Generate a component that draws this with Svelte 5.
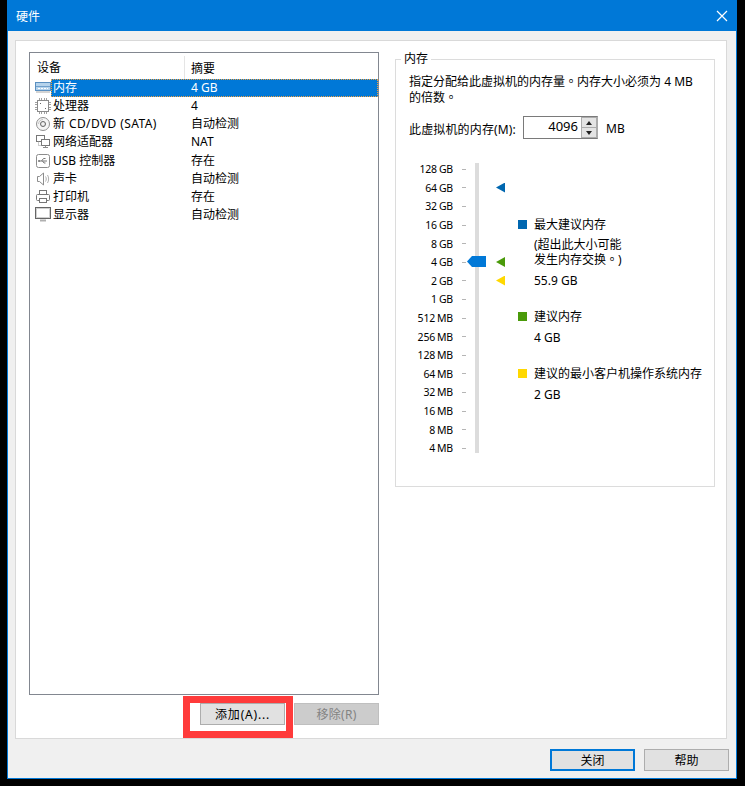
<script>
	const devices = [
		{ name: '内存', summary: '4 GB', icon: 'memory', selected: true },
		{ name: '处理器', summary: '4', icon: 'cpu' },
		{ name: '新 CD/DVD (SATA)', summary: '自动检测', icon: 'cd', wide: true },
		{ name: '网络适配器', summary: 'NAT', icon: 'net' },
		{ name: 'USB 控制器', summary: '存在', icon: 'usb' },
		{ name: '声卡', summary: '自动检测', icon: 'sound' },
		{ name: '打印机', summary: '存在', icon: 'printer' },
		{ name: '显示器', summary: '自动检测', icon: 'display' }
	];

	const scale = [
		{ label: '128 GB' },
		{ label: '64 GB', marker: 'blue' },
		{ label: '32 GB' },
		{ label: '16 GB' },
		{ label: '8 GB' },
		{ label: '4 GB', marker: 'green', thumb: true },
		{ label: '2 GB', marker: 'yellow' },
		{ label: '1 GB' },
		{ label: '512 MB' },
		{ label: '256 MB' },
		{ label: '128 MB' },
		{ label: '64 MB' },
		{ label: '32 MB' },
		{ label: '16 MB' },
		{ label: '8 MB' },
		{ label: '4 MB' }
	];
</script>

<div class="window">
	<header class="titlebar">
		<span>硬件</span>
		<svg class="close-x" width="12" height="12" viewBox="0 0 12 12">
			<path d="M1 1l10 10M11 1L1 11" stroke="#fff" stroke-width="1.2" fill="none" />
		</svg>
	</header>

	<main class="panel">
		<section class="left">
			<div class="listbox">
				<div class="list-head">
					<div class="col-device">设备</div>
					<div class="col-summary">摘要</div>
				</div>
				{#each devices as d}
					<div class="row">
						<svg class="icon" width="16" height="16" viewBox="0 0 16 16" fill="none">
							{#if d.icon === 'memory'}
								<rect x="0.5" y="2.5" width="15" height="8" fill="#b5d3ec" stroke="#5a8fc0" />
								<path d="M1 6.500h14" stroke="#6f9fcb" />
								<path d="M3 8.500h2M6 8.500h2M9 8.500h2M12 8.500h1" stroke="#fff" />
								<path d="M1 12h14" stroke="#a8a8a8" />
							{:else if d.icon === 'cpu'}
								<rect x="2.500" y="2.500" width="11" height="11" fill="#fff" stroke="#8a8a8a" />
								<path d="M4.500 0v2M6.500 0v2M9.500 0v2M11.500 0v2M4.500 14v2M6.500 14v2M9.500 14v2M11.500 14v2M0 4.500h2M0 6.500h2M0 9.500h2M0 11.500h2M14 4.500h2M14 6.500h2M14 9.500h2M14 11.500h2" stroke="#a0a0a0" />
								<path d="M5 5h1v1H5zM10 10h1v1h-1z" fill="#666" />
							{:else if d.icon === 'cd'}
								<circle cx="8" cy="8" r="6.500" fill="#f5f5f5" stroke="#909090" />
								<path d="M3.500 8a4.500 4.500 0 0 1 4.500-4.500" stroke="#c4c4c4" />
								<circle cx="8" cy="8" r="2.500" fill="#e8e8e8" stroke="#666" />
								<circle cx="8" cy="8" r="0.800" fill="#fff" />
							{:else if d.icon === 'net'}
								<rect x="1.500" y="1.500" width="8" height="6" fill="#fff" stroke="#777" />
								<rect x="6.500" y="5.500" width="8" height="6" fill="#fff" stroke="#777" />
								<path d="M10.500 11.500v2M8 13.500h5" stroke="#8a8a8a" />
								<path d="M3.500 7.500v4h3" stroke="#999" stroke-dasharray="1 1" />
							{:else if d.icon === 'usb'}
								<rect x="1.500" y="1.500" width="13" height="13" rx="2" fill="#fff" stroke="#8c8c8c" />
								<path d="M4 8h8M6.500 8l2-2.500h2M7.500 8l1.500 2h1.500" stroke="#777" />
								<circle cx="4" cy="8" r="1" fill="#777" />
							{:else if d.icon === 'sound'}
								<path d="M2.500 5.500h2l4-3.500v12l-4-3.500h-2z" fill="#fff" stroke="#8c8c8c" />
								<path d="M10.500 5.500c1 1.500 1 3.500 0 5M12.500 4c1.500 2.500 1.500 5.500 0 8" stroke="#b0b0b0" />
							{:else if d.icon === 'printer'}
								<rect x="4.500" y="1.500" width="7" height="4" fill="#fff" stroke="#777" />
								<rect x="1.500" y="5.500" width="13" height="6" rx="1" fill="#fff" stroke="#777" />
								<rect x="4.500" y="9.500" width="7" height="4" fill="#fff" stroke="#777" />
							{:else}
								<rect x="0.500" y="0.500" width="15" height="11" fill="#fff" stroke="#666" />
								<rect x="1.500" y="1.500" width="13" height="9" stroke="#d0d0d0" />
								<path d="M5 13.500h6" stroke="#b0b0b0" stroke-width="2" />
							{/if}
						</svg>
						<div class="cell" class:selected={d.selected}>
							<span class="name" class:wide={d.wide}>{d.name}</span>
							<span class="summary">{d.summary}</span>
						</div>
					</div>
				{/each}
			</div>
			<div class="list-actions">
				<button class="btn add">添加(A)...</button>
				<button class="btn disabled">移除(R)</button>
				<div class="annotation"></div>
			</div>
		</section>

		<fieldset class="group">
			<legend>内存</legend>
			<p class="desc">指定分配给此虚拟机的内存量<span class="tc">。</span>内存大小必须为 4 MB<br />的倍数<span class="tc">。</span></p>
			<div class="amount">
				<span class="amount-label">此虚拟机的内存(M):</span>
				<div class="spin">
					<div class="spin-value">4096</div>
					<div class="spin-btns">
						<div class="spin-btn"><i class="up"></i></div>
						<div class="spin-btn"><i class="down"></i></div>
					</div>
				</div>
				<span class="unit">MB</span>
			</div>

			<div class="slider-area">
				<div class="scale">
					{#each scale as s}
						<div class="scale-row">
							<span class="scale-label">{s.label}</span>
							<span class="tick"></span>
							{#if s.thumb}<span class="thumb"></span>{/if}
							{#if s.marker}<span class="marker {s.marker}"></span>{/if}
						</div>
					{/each}
				</div>

				<div class="legend-col">
					<div class="legend-title first"><span class="sq blue"></span>最大建议内存</div>
					<div class="note">(超出此大小可能<br />发生内存交换<span class="tc">。</span>)</div>
					<div class="value v1">55.9 GB</div>
					<div class="legend-title second"><span class="sq green"></span>建议内存</div>
					<div class="value v2">4 GB</div>
					<div class="legend-title third"><span class="sq yellow"></span>建议的最小客户机操作系统内存</div>
					<div class="value v2">2 GB</div>
				</div>
			</div>
		</fieldset>
	</main>

	<footer class="footer">
		<button class="btn primary">关闭</button>
		<button class="btn help">帮助</button>
	</footer>
</div>

<style>
	:global(body) {
		background: #000;
	}

	.window {
		box-sizing: border-box;
		width: 730px;
		height: 779px;
		margin-left: 7px;
		border: 1px solid #0078d7;
		border-top: 0;
		background: #f0f0f0;
		font-family: "Noto Sans", "Noto Sans CJK SC", sans-serif;
		font-size: 12px;
		color: #000;
		text-spacing-trim: space-all;
	}

	.tc {
		font-family: "Noto Sans CJK TC", sans-serif;
	}

	.titlebar {
		height: 31px;
		background: #0078d7;
		color: #fff;
		display: flex;
		align-items: center;
		justify-content: space-between;
		padding: 0 8px;
		font-size: 12px;
	}

	.panel {
		box-sizing: border-box;
		height: 699px;
		margin: 9px 9px 0 7px;
		padding: 11px 11px 11px 13px;
		background: #fff;
		border: 1px solid #d9d9d9;
		display: flex;
		gap: 16px;
	}

	.left {
		width: 350px;
		flex: none;
	}

	.listbox {
		box-sizing: border-box;
		height: 643px;
		border: 1px solid #828790;
		background: #fff;
	}

	.list-head {
		display: flex;
		height: 26px;
		align-items: center;
		padding-top: 4px;
		box-sizing: border-box;
	}

	.col-device {
		box-sizing: border-box;
		width: 155px;
		padding-left: 7px;
		border-right: 1px solid #e5e5e5;
		line-height: 24px;
	}

	.col-summary {
		padding-left: 6px;
	}

	.row {
		display: flex;
		align-items: center;
		height: 18.15px;
		padding-left: 5px;
	}

	.icon {
		flex: none;
	}

	.cell {
		flex: 1;
		display: flex;
		align-items: center;
		height: 18px;
		box-sizing: border-box;
		line-height: 18px;
	}

	.cell.selected {
		background: #0078d7;
		color: #fff;
		outline: 1px dotted #f0a040;
		outline-offset: -1px;
	}

	.name {
		width: 139px;
		padding-left: 2px;
		flex: none;
		box-sizing: border-box;
	}

	.name.wide {
		letter-spacing: 0.4px;
	}

	.summary {
		padding-left: 1px;
	}

	.list-actions {
		position: relative;
		display: flex;
		justify-content: flex-end;
		gap: 9px;
		margin-top: 8px;
	}

	.btn {
		box-sizing: border-box;
		width: 85px;
		height: 22px;
		padding: 0;
		background: #e1e1e1;
		border: 1px solid #adadad;
		font: inherit;
		color: #000;
	}

	.btn.add {
		letter-spacing: 0.8px;
	}

	.btn.disabled {
		background: #ccc;
		border-color: #bfbfbf;
		color: #838383;
		letter-spacing: 0.3px;
	}

	.annotation {
		position: absolute;
		left: 154px;
		top: -7px;
		width: 110px;
		height: 42px;
		box-sizing: border-box;
		border: 7px solid #ff3b3b;
		pointer-events: none;
	}

	.group {
		box-sizing: border-box;
		width: 321px;
		height: 435px;
		margin: 0;
		padding: 0 13px;
		border: 1px solid #dcdcdc;
		min-width: 0;
	}

	legend {
		margin-left: -8px;
		padding: 0 3px;
		line-height: 14px;
		font-size: 12px;
	}

	.desc {
		margin: 0;
		padding-top: 7px;
		line-height: 15px;
		font-size: 12px;
	}

	.amount {
		display: flex;
		align-items: center;
		margin-top: 11px;
		height: 23px;
	}

	.amount-label {
		width: 114px;
		flex: none;
		letter-spacing: 0.15px;
		white-space: nowrap;
		padding-top: 2px;
	}

	.spin {
		display: flex;
		box-sizing: border-box;
		width: 75px;
		height: 23px;
		border: 1px solid #7a7a7a;
		border-right-color: #acacac;
		border-bottom-color: #7a7a7a;
	}

	.spin-value {
		flex: 1;
		text-align: right;
		line-height: 19px;
		padding-right: 3px;
		font-size: 13px;
	}

	.spin-btns {
		width: 16px;
		box-sizing: border-box;
		display: flex;
		flex-direction: column;
		background: #acacac;
		border: 1px solid #acacac;
		gap: 1px;
	}

	.spin-btn {
		flex: 1;
		background: #e4e4e4;
		display: flex;
		align-items: center;
		justify-content: center;
	}

	.spin-btn i {
		width: 0;
		height: 0;
		border-left: 3px solid transparent;
		border-right: 3px solid transparent;
	}

	.spin-btn i.up {
		border-bottom: 4px solid #222;
	}

	.spin-btn i.down {
		border-top: 4px solid #222;
	}

	.unit {
		margin-left: 8px;
		padding-top: 2px;
	}

	.slider-area {
		display: flex;
		margin-top: 24px;
	}

	.scale {
		width: 122px;
		flex: none;
		margin-left: -13px;
		height: 290px;
		background: linear-gradient(#dcdcdc, #dcdcdc) 79px 0 / 4px 100% no-repeat;
	}

	.scale-row {
		position: relative;
		display: flex;
		align-items: center;
		height: 18.6px;
		top: -3px;
		font-size: 10.5px;
		color: #000;
	}

	.scale-label {
		box-sizing: border-box;
		width: 57px;
		text-align: right;
		flex: none;
		white-space: nowrap;
		letter-spacing: -0.2px;
		word-spacing: -0.5px;
	}

	.tick {
		width: 4px;
		height: 1px;
		margin-left: 9px;
		background: #b5b5b5;
		flex: none;
	}

	.thumb {
		position: absolute;
		left: 71px;
		top: 3px;
		width: 19px;
		height: 11px;
		background: #0078d7;
		clip-path: polygon(0 50%, 5px 0, 100% 0, 100% 100%, 5px 100%);
	}

	.marker {
		position: absolute;
		left: 100px;
		top: 4px;
		width: 9px;
		height: 10px;
		clip-path: polygon(0 50%, 100% 0, 100% 100%);
	}

	.marker.blue {
		background: #0067b0;
	}

	.marker.green {
		background: #4a9a0a;
	}

	.marker.yellow {
		background: #ffd800;
	}

	.legend-col {
		display: flex;
		flex-direction: column;
		font-size: 12px;
		padding-top: 52px;
	}

	.legend-title {
		display: flex;
		align-items: center;
		height: 18px;
		white-space: nowrap;
	}

	.sq {
		width: 9px;
		height: 9px;
		margin-right: 7px;
		flex: none;
	}

	.sq.blue {
		background: #0067b0;
	}

	.sq.green {
		background: #4a9a0a;
	}

	.sq.yellow {
		background: #ffd800;
	}

	.note {
		margin: 5px 0 0 16px;
		line-height: 14px;
	}

	.value {
		margin-left: 16px;
		line-height: 18px;
	}

	.v1 {
		margin-top: 5px;
	}

	.v2 {
		margin-top: 4px;
	}

	.second {
		margin-top: 17px;
	}

	.third {
		margin-top: 17px;
	}

	.footer {
		display: flex;
		justify-content: flex-end;
		gap: 9px;
		padding: 10px 7px 0 0;
	}

	.primary {
		border: 2px solid #0078d7;
	}
</style>
